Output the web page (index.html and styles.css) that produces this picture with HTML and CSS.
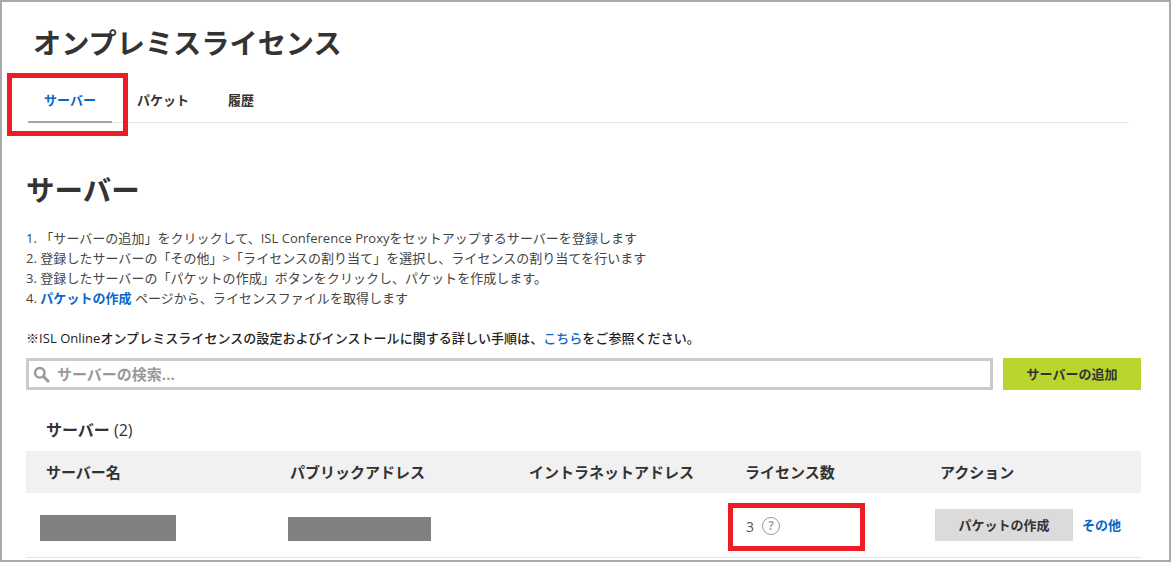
FILE: index.html
```html
<!DOCTYPE html>
<html lang="ja">
<head>
<meta charset="utf-8">
<title>オンプレミスライセンス</title>
<link rel="stylesheet" href="styles.css">
</head>
<body>
<div class="frame">
  <h1 class="title">オンプレミスライセンス</h1>
  <nav class="tabs">
    <a class="tab tab-active">サーバー</a>
    <a class="tab tab-packet">パケット</a>
    <a class="tab tab-history">履歴</a>
  </nav>
  <h2 class="section-title">サーバー</h2>
  <ol class="steps">
    <li>1. 「サーバーの追加」をクリックして、ISL Conference Proxyをセットアップするサーバーを登録します</li>
    <li>2. 登録したサーバーの「その他」&gt;「ライセンスの割り当て」を選択し、ライセンスの割り当てを行います</li>
    <li>3. 登録したサーバーの「パケットの作成」ボタンをクリックし、パケットを作成します。</li>
    <li>4. <a class="link-strong">パケットの作成</a> ページから、ライセンスファイルを取得します</li>
  </ol>
  <p class="note">※ISL Onlineオンプレミスライセンスの設定およびインストールに関する詳しい手順は、<a class="link">こちら</a>をご参照ください。</p>
  <div class="toolbar">
    <div class="search">
      <svg class="search-icon" width="17" height="17" viewBox="0 0 17 17"><circle cx="6.8" cy="6.8" r="4.8" fill="none" stroke="#999" stroke-width="2.4"/><path d="M10.5 10.5 15 15" stroke="#999" stroke-width="3" stroke-linecap="round"/></svg>
      <span class="search-text">サーバーの検索...</span>
    </div>
    <button class="btn-add">サーバーの追加</button>
  </div>
  <h3 class="count">サーバー <span class="count-num">(2)</span></h3>
  <div class="table">
    <div class="row head">
      <div>サーバー名</div>
      <div>パブリックアドレス</div>
      <div>イントラネットアドレス</div>
      <div>ライセンス数</div>
      <div>アクション</div>
    </div>
    <div class="row body">
      <div><span class="redact redact-name"></span></div>
      <div><span class="redact redact-addr"></span></div>
      <div></div>
      <div class="licenses">3 <span class="help">?</span></div>
      <div class="actions"><button class="btn-packet">パケットの作成</button><a class="link-more">その他</a></div>
    </div>
  </div>
  <div class="highlight highlight-tab"></div>
  <div class="highlight highlight-count"></div>
</div>
</body>
</html>
```

FILE: styles.css
```css
* { box-sizing: border-box; }
html, body { margin: 0; padding: 0; }
body {
  background: #fff;
  color: #333;
  font-family: "Open Sans", "Noto Sans CJK JP", sans-serif;
  overflow: hidden;
}
.frame {
  position: relative;
  width: 1171px;
  height: 562px;
  border: 2px solid #aaa8a9;
  overflow: hidden;
  padding-left: 24px;
}
.title {
  margin: 0;
  padding: 21px 0 0 7px;
  height: 74px;
  font-size: 28.2px;
  line-height: 40px;
  font-weight: 700;
  color: #333;
}
.tabs {
  display: flex;
  width: 1101px;
  height: 47px;
  margin-left: 2px;
  border-bottom: 1px solid #e5e5e5;
}
.tab {
  font-size: 13px;
  font-weight: 700;
  line-height: 20px;
  padding-top: 14px;
  color: #333;
}
.tab-active {
  width: 84px;
  height: 47px;
  text-align: center;
  color: #0a66c8;
  border-bottom: 2px solid #a6a6a6;
}
.tab-packet { margin-left: 25px; width: 91px; }
.section-title {
  margin: 45px 0 0;
  font-size: 28.5px;
  line-height: 44px;
  height: 44px;
  font-weight: 700;
}
.steps {
  list-style: none;
  margin: 16px 0 0;
  padding: 0;
  font-size: 13px;
  letter-spacing: 0.03px;
  line-height: 20px;
  color: #444;
}
.link-strong { color: #0a66c8; font-weight: 700; }
.note {
  margin: 20px 0 0;
  font-size: 13px;
  letter-spacing: 0.05px;
  line-height: 20px;
  font-weight: 500;
  color: #222;
}
.link { color: #0a66c8; }
.toolbar {
  display: flex;
  gap: 10px;
  margin-top: 10px;
  width: 1115px;
  height: 32px;
}
.search {
  flex: 1;
  display: flex;
  align-items: center;
  gap: 7px;
  border: 3px solid #cbcbcb;
  padding-left: 4px;
}
.search-text {
  font-size: 15px;
  font-weight: 700;
  color: #999;
  margin-bottom: 2px;
}
.btn-add {
  width: 138px;
  border: 0;
  padding: 0 0 2px;
  background: #b9d62f;
  color: #333;
  font: 700 13px "Open Sans", "Noto Sans CJK JP", sans-serif;
}
.count {
  margin: 27px 0 0 20px;
  padding-top: 1px;
  height: 34px;
  font-size: 16px;
  line-height: 24px;
  font-weight: 700;
}
.count-num { font-weight: 400; font-size: 16px; }
.table { width: 1115px; }
.row {
  display: grid;
  grid-template-columns: 244px 239px 216px 195px 1fr;
  padding-left: 20px;
  align-items: center;
}
.head {
  height: 42px;
  padding-bottom: 2px;
  background: #f1f1f1;
  font-size: 15px;
  font-weight: 700;
}
.body {
  height: 65px;
  border-bottom: 1px solid #e5e5e5;
  font-size: 14px;
}
.redact { display: block; background: #808080; }
.redact-name { width: 136px; height: 26px; margin: 5px 0 0 -6px; }
.redact-addr { width: 143px; height: 24px; margin: 7px 0 0 -2px; }
.licenses {
  display: flex;
  align-items: center;
  gap: 8px;
  margin: 2px 0 0 1px;
  color: #555;
}
.help {
  width: 18px;
  height: 18px;
  border: 1px solid #999;
  border-radius: 50%;
  color: #999;
  font-size: 12px;
  font-weight: 600;
  line-height: 16px;
  text-align: center;
}
.actions {
  display: flex;
  align-items: center;
  gap: 9px;
  margin: 0 0 0 -5px;
}
.btn-packet {
  width: 138px;
  height: 32px;
  border: 0;
  padding: 0 0 2px;
  background: #dbdbdb;
  color: #333;
  font: 700 13px "Open Sans", "Noto Sans CJK JP", sans-serif;
}
.link-more { color: #0a66c8; font-size: 13px; font-weight: 700; margin-bottom: 2px; }
.highlight {
  position: absolute;
  border: 5px solid #ee1c25;
}
.highlight-tab { left: 5px; top: 71px; width: 121px; height: 63px; }
.highlight-count { left: 726px; top: 501px; width: 137px; height: 48px; }
```
